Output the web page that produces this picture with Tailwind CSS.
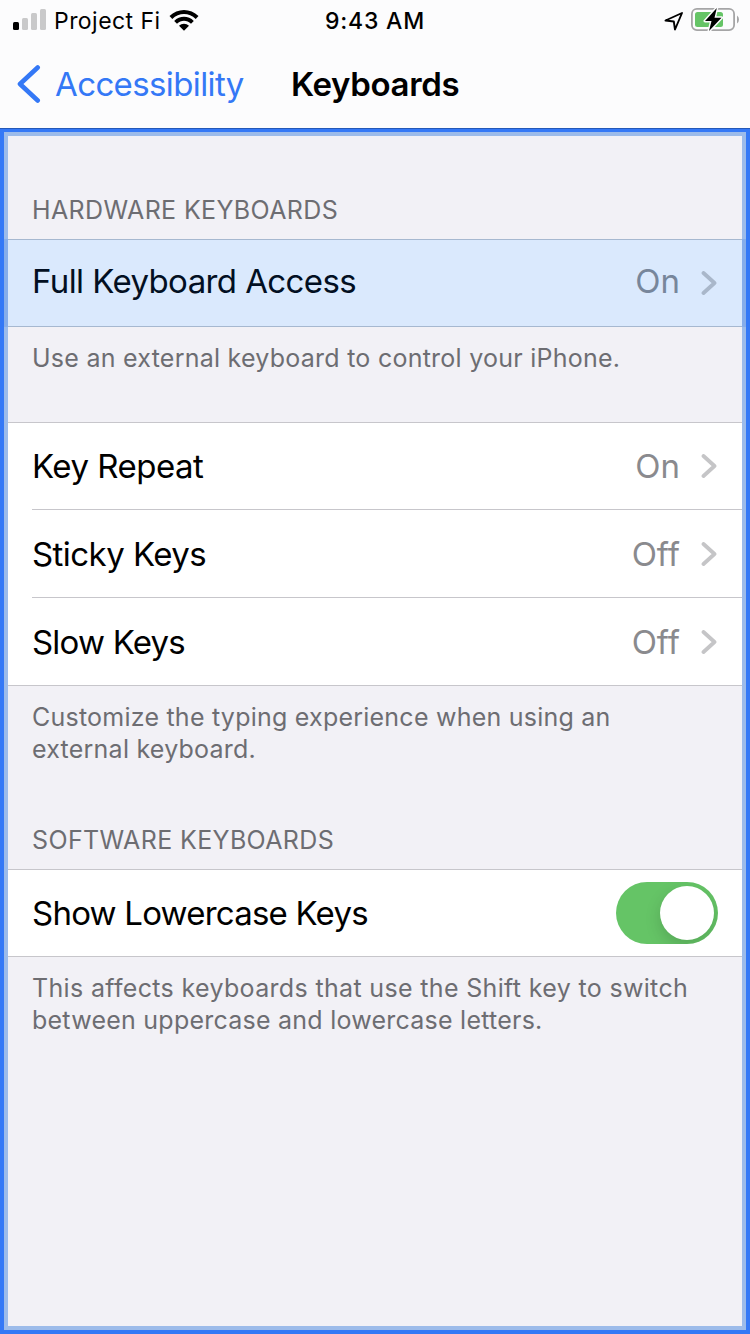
<!DOCTYPE html>
<html lang="en">
<head>
<meta charset="utf-8">
<title>Keyboards</title>
<script src="https://cdn.jsdelivr.net/npm/@tailwindcss/browser@4"></script>
</head>
<body class="flex h-[1334px] w-[750px] flex-col overflow-hidden bg-[#fcfcfd] font-['Inter','Liberation_Sans',sans-serif] text-black">
<header class="flex h-32 shrink-0 flex-col">
  <div class="grid h-10 grid-cols-3 items-center pr-[11px] pb-px pl-[13px]">
    <div class="flex items-center">
      <svg class="h-[21px] w-[33px]" viewBox="0 0 33 21"><rect y="13" width="6" height="8" rx="1.5"/><g fill="#c9c9ca"><rect x="9" y="9" width="6" height="12" rx="1.5"/><rect x="18" y="4" width="6" height="17" rx="1.5"/><rect x="27" y="0" width="6" height="21" rx="1.5"/></g></svg>
      <span class="ml-2 pt-[3px] text-[23px] leading-9 tracking-[0.45px] whitespace-nowrap">Project Fi</span>
      <svg class="ml-2 h-[22px] w-[30px] shrink-0" viewBox="0 0 30 22"><path d="M0.5 7.1C8.5-1.1 21.5-1.1 29.5 7.1L26.7 9.9C20.2 3.4 9.8 3.4 3.3 9.9ZM5.2 11.9C10.6 6.4 19.4 6.4 24.8 11.9L22 14.7C18.1 10.8 11.9 10.8 8 14.7ZM10 16.8C12.8 14 17.2 14 20 16.8L15 21.7Z"/></svg>
    </div>
    <div class="pt-[3px] pr-0.5 text-center text-[23px] leading-9 font-medium tracking-[0.8px]">9:43 AM</div>
    <div class="flex items-center justify-end">
      <svg class="mt-0.5 h-5 w-5" viewBox="0 0 20 20"><path d="M1.5 9.5L18 2L11 18.5L9.8 10.5Z" fill="none" stroke="#000" stroke-width="1.9" stroke-linejoin="round"/></svg>
      <svg class="mt-px ml-[7px] h-6 w-12" viewBox="0 0 48 24"><rect x=".9" y=".9" width="42.2" height="21.2" rx="5" fill="none" stroke="#a5a5a6" stroke-width="1.8"/><rect x="4" y="4" width="28" height="15" rx="2.5" fill="#65c466"/><path d="M46 7.5V15.5Q48 14 48 11.5T46 7.5Z" fill="#a5a5a6"/><path d="M25.8 0L14 13H20.5L18 23L30.5 9.7H23.5Z" fill="#000" stroke="#fcfcfd" stroke-width="3" paint-order="stroke" stroke-linejoin="round"/></svg>
    </div>
  </div>
  <div class="grid h-[88px] grid-cols-[291px_1fr] items-center">
    <div class="flex items-center pl-[17px] text-[#3478f6]">
      <svg class="h-[38px] w-6" viewBox="0 0 24 38"><path d="M20.7 2.5L3 19L20.7 35.5" fill="none" stroke="currentColor" stroke-width="4.6" stroke-linecap="round" stroke-linejoin="round"/></svg>
      <span class="ml-[14px] text-[33px] leading-[88px] tracking-[-0.62px]">Accessibility</span>
    </div>
    <h1 class="text-[33px] leading-[88px] font-semibold tracking-[-0.35px]">Keyboards</h1>
  </div>
</header>
<div class="flex min-h-0 flex-1 flex-col border-t border-[#2458b8]">
<div class="flex min-h-0 flex-1 border-4 border-t-3 border-[#3478f6]">
<main class="flex flex-1 flex-col border-4 border-[#9cbbea] bg-[#f2f1f6]">
  <h2 class="flex h-[103px] items-end pb-3 pl-6 text-[25px] leading-[34px] tracking-[0.37px] text-[#6d6d72]">HARDWARE KEYBOARDS</h2>
  <div class="-mx-1 flex h-[88px] items-center border-x-4 border-x-[#86adea] bg-[#dae9fd] pr-[25px] pl-6 shadow-[inset_0_1px_0_#a6b8d0,inset_0_-1px_0_#a6b8d0]">
    <span class="pb-0.5 text-[33px] tracking-[-0.6px] text-[#020f22]">Full Keyboard Access</span>
    <span class="ml-auto pb-0.5 text-[33px] text-[#77869b]">On</span>
    <svg class="ml-[21px] h-6 w-4 text-[#a9b7ca]" viewBox="0 0 16 24"><path d="M2.5 2L13.5 12L2.5 22" fill="none" stroke="currentColor" stroke-width="3.8" stroke-linecap="round" stroke-linejoin="round"/></svg>
  </div>
  <p class="h-[95px] pt-[15px] pl-6 text-[25px] leading-8 tracking-[0.25px] text-[#6d6d72]">Use an external keyboard to control your iPhone.</p>
  <div class="flex h-[264px] flex-col border-y border-[#c7c6cb] bg-white pl-6">
    <div class="flex h-[87px] items-center border-b border-[#c7c6cb] pr-[25px]">
      <span class="pt-0.5 text-[33px] tracking-[-0.5px]">Key Repeat</span><span class="ml-auto pt-0.5 text-[33px] text-[#8a8a8e]">On</span>
      <svg class="ml-[21px] h-6 w-4 text-[#c5c5c7]" viewBox="0 0 16 24"><path d="M2.5 2L13.5 12L2.5 22" fill="none" stroke="currentColor" stroke-width="3.8" stroke-linecap="round" stroke-linejoin="round"/></svg>
    </div>
    <div class="flex h-[88px] items-center border-b border-[#c7c6cb] pr-[25px]">
      <span class="pt-0.5 text-[33px] tracking-[-0.55px]">Sticky Keys</span><span class="ml-auto pt-0.5 text-[33px] text-[#8a8a8e]">Off</span>
      <svg class="ml-[21px] h-6 w-4 text-[#c5c5c7]" viewBox="0 0 16 24"><path d="M2.5 2L13.5 12L2.5 22" fill="none" stroke="currentColor" stroke-width="3.8" stroke-linecap="round" stroke-linejoin="round"/></svg>
    </div>
    <div class="flex h-[87px] items-center pr-[25px]">
      <span class="pt-0.5 text-[33px] tracking-[-0.8px]">Slow Keys</span><span class="ml-auto pt-0.5 text-[33px] text-[#8a8a8e]">Off</span>
      <svg class="ml-[21px] h-6 w-4 text-[#c5c5c7]" viewBox="0 0 16 24"><path d="M2.5 2L13.5 12L2.5 22" fill="none" stroke="currentColor" stroke-width="3.8" stroke-linecap="round" stroke-linejoin="round"/></svg>
    </div>
  </div>
  <p class="h-[105px] pt-[15px] pl-6 text-[25px] leading-8 tracking-[0.23px] text-[#6d6d72]">Customize the typing experience when using an<br>external keyboard.</p>
  <h2 class="flex h-[78px] items-end pb-3 pl-6 text-[25px] leading-[34px] tracking-[0.37px] text-[#6d6d72]">SOFTWARE KEYBOARDS</h2>
  <div class="flex h-[88px] items-center border-y border-[#c7c6cb] bg-white pr-6 pl-6">
    <span class="pt-0.5 text-[33px] tracking-[-0.78px]">Show Lowercase Keys</span>
    <div class="ml-auto flex h-[62px] w-[102px] items-center justify-end overflow-hidden rounded-full bg-[#65c466] pr-1"><div class="size-[54px] rounded-full bg-white shadow-[0_6px_16px_rgba(0,0,0,0.15)]"></div></div>
  </div>
  <p class="pt-[15px] pl-6 text-[25px] leading-8 text-[#6d6d72]"><span class="tracking-[0.34px]">This affects keyboards that use the Shift key to switch</span><br><span class="tracking-[0.24px]">between uppercase and lowercase letters.</span></p>
</main>
</div>
</div>
</body>
</html>
